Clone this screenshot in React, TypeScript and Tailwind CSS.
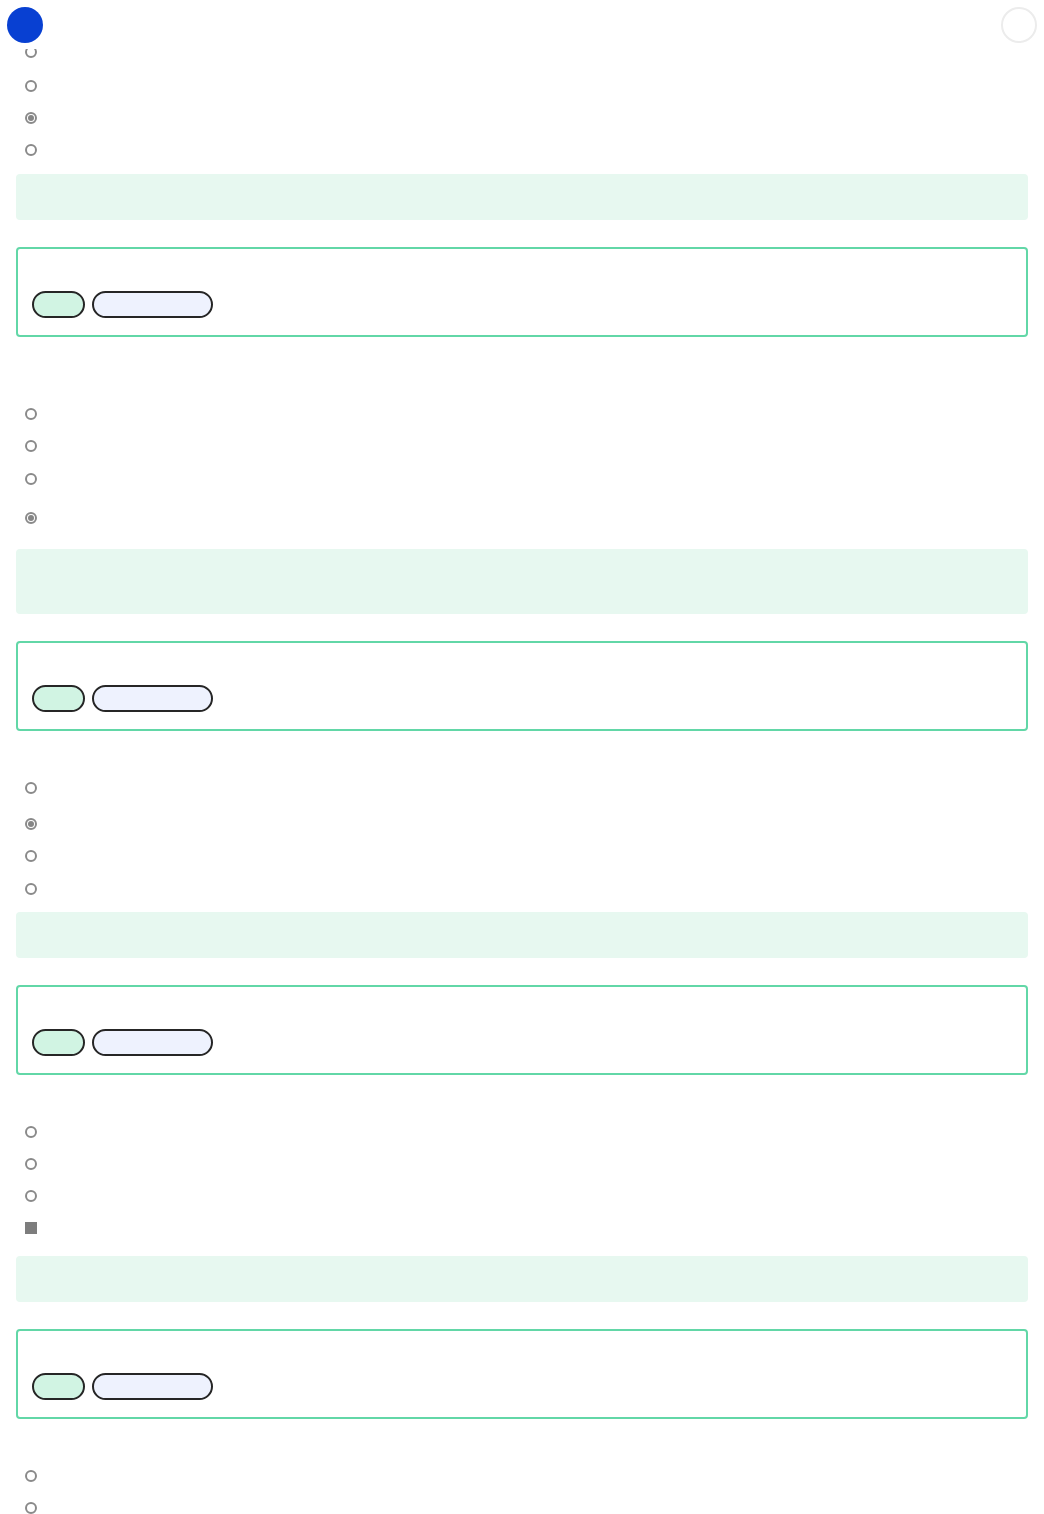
type Opt = { mt: number; kind?: 'radio' | 'checked' | 'square' };

interface Question {
  top: number; // space above first option
  options: Opt[];
  explainGap: number;
  explainH: number;
}

const questions: Question[] = [
  {
    top: 46,
    options: [{ mt: 0 }, { mt: 22 }, { mt: 20, kind: 'checked' }, { mt: 20 }],
    explainGap: 18,
    explainH: 46,
  },
  {
    top: 71,
    options: [{ mt: 0 }, { mt: 20 }, { mt: 21 }, { mt: 27, kind: 'checked' }],
    explainGap: 25,
    explainH: 65,
  },
  {
    top: 51,
    options: [{ mt: 0 }, { mt: 24, kind: 'checked' }, { mt: 20 }, { mt: 21 }],
    explainGap: 17,
    explainH: 46,
  },
  {
    top: 51,
    options: [{ mt: 0 }, { mt: 20 }, { mt: 20 }, { mt: 20, kind: 'square' }],
    explainGap: 22,
    explainH: 46,
  },
  {
    top: 51,
    options: [{ mt: 0 }, { mt: 20 }, { mt: 20 }, { mt: 20 }],
    explainGap: 20,
    explainH: 46,
  },
];

const Marker = ({ kind = 'radio' }: { kind?: Opt['kind'] }) => {
  if (kind === 'square') {
    return <span className="block h-[12px] w-[12px] bg-[#7d7d7d]" />;
  }
  return (
    <span className="flex h-[12px] w-[12px] items-center justify-center rounded-full border-2 border-[#8a8a8a] bg-white">
      {kind === 'checked' && <span className="block h-[6px] w-[6px] rounded-full bg-[#858585]" />}
    </span>
  );
};

const QuestionBlock = ({ q }: { q: Question }) => (
  <section style={{ paddingTop: q.top }}>
    {/* options */}
    <div className="flex flex-col pl-[9px]">
      {q.options.map((o, i) => (
        <label key={i} className="flex h-[12px] items-center" style={{ marginTop: o.mt }}>
          <Marker kind={o.kind} />
        </label>
      ))}
    </div>

    {/* explanation */}
    <div
      className="rounded-[4px] bg-[#e7f8f0]"
      style={{ marginTop: q.explainGap, height: q.explainH }}
    />

    {/* answer box */}
    <div className="mt-[27px] h-[90px] rounded-[4px] border-2 border-[#62d7a7] bg-white px-[14px] pt-[42px]">
      <div className="flex gap-[7px]">
        <span className="h-[27px] w-[53px] rounded-full border-2 border-[#262626] bg-[#d1f4e3]" />
        <span className="h-[27px] w-[121px] rounded-full border-2 border-[#262626] bg-[#eef2fe]" />
      </div>
    </div>
  </section>
);

export default function App() {
  return (
    <div className="min-h-screen bg-white font-['Liberation_Sans',sans-serif]">
      {/* header */}
      <header className="fixed top-0 right-0 left-0 z-10 flex h-[49px] items-start justify-between bg-white px-[7px] pt-[7px]">
        <span className="block h-[36px] w-[36px] rounded-full bg-[#0840d2]" />
        <span className="block h-[36px] w-[36px] rounded-full border-2 border-[#ececec] bg-white" />
      </header>

      <main className="px-4 pb-10">
        {questions.map((q, i) => (
          <QuestionBlock key={i} q={q} />
        ))}
      </main>
    </div>
  );
}
